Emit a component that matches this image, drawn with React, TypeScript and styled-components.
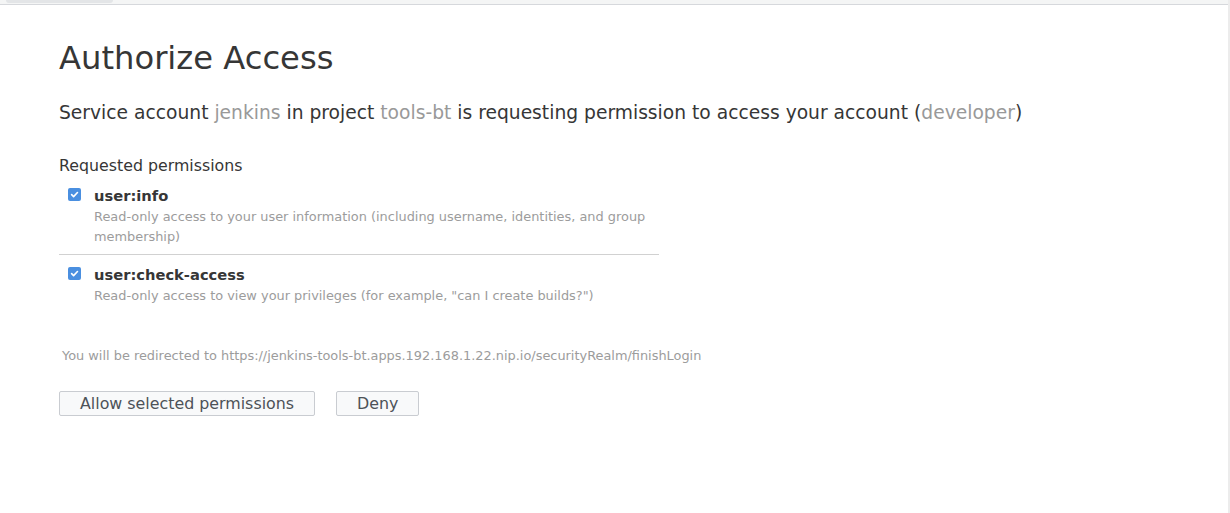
import styled, { createGlobalStyle } from 'styled-components';

const GlobalStyle = createGlobalStyle`
  html, body {
    margin: 0;
    padding: 0;
    background: #fff;
  }
  body {
    font-family: "DejaVu Sans", "Liberation Sans", sans-serif;
    color: #363636;
  }
`;

interface Permission {
  name: string;
  description: string;
}

const permissions: Permission[] = [
  {
    name: 'user:info',
    description:
      'Read-only access to your user information (including username, identities, and group membership)',
  },
  {
    name: 'user:check-access',
    description:
      'Read-only access to view your privileges (for example, "can I create builds?")',
  },
];

function App() {
  return (
    <>
      <GlobalStyle />
      <Frame>
        <TopBar>
          <Tab />
        </TopBar>
        <Content>
          <Title>Authorize Access</Title>
          <Lead>
            Service account <Muted>jenkins</Muted> in project{' '}
            <Muted>tools-bt</Muted> is requesting permission to access your
            account (<Muted>developer</Muted>)
          </Lead>

          <SectionTitle>Requested permissions</SectionTitle>
          <PermissionList>
            {permissions.map((p) => (
              <PermissionItem key={p.name}>
                <Check>
                  <svg width="9" height="9" viewBox="0 0 10 10" fill="none">
                    <path
                      d="M1.8 5.2 L4 7.3 L8.3 2.8"
                      stroke="#fff"
                      strokeWidth="1.8"
                      strokeLinecap="round"
                      strokeLinejoin="round"
                    />
                  </svg>
                </Check>
                <div>
                  <PermName>{p.name}</PermName>
                  <PermDesc>{p.description}</PermDesc>
                </div>
              </PermissionItem>
            ))}
          </PermissionList>

          <Redirect>
            You will be redirected to
            https://jenkins-tools-bt.apps.192.168.1.22.nip.io/securityRealm/finishLogin
          </Redirect>

          <Actions>
            <Button>Allow selected permissions</Button>
            <Button>Deny</Button>
          </Actions>
        </Content>
      </Frame>
    </>
  );
}

const Frame = styled.div`
  min-height: 513px;
  box-sizing: border-box;
  border-right: 2px solid #ececec;
`;

const TopBar = styled.div`
  height: 4px;
  background: #f4f5f5;
  border-bottom: 1px solid #d6d8dc;
  padding-left: 6px;
`;

const Tab = styled.div`
  width: 107px;
  height: 3px;
  background: #e3e5e7;
  border-radius: 0 0 3px 3px;
`;

const Content = styled.main`
  padding: 0 59px;
`;

const Title = styled.h1`
  margin: 35px 0 0;
  font-size: 32.2px;
  line-height: 37px;
  font-weight: normal;
  color: #363636;
`;

const Lead = styled.p`
  margin: 25px 0 0;
  font-size: 18.7px;
  line-height: 21px;
`;

const Muted = styled.span`
  color: #999;
`;

const SectionTitle = styled.h3`
  margin: 33px 0 0;
  font-size: 15.8px;
  line-height: 19px;
  font-weight: normal;
`;

const PermissionList = styled.ul`
  list-style: none;
  margin: 1px 0 0;
  padding: 0;
  width: 600px;
`;

const PermissionItem = styled.li`
  display: grid;
  grid-template-columns: 13px 1fr;
  column-gap: 13px;
  padding: 9px 0 7px 9px;
  border-bottom: 1px solid #d1d1d1;

  &:last-child {
    border-bottom: none;
  }
`;

const Check = styled.span`
  display: flex;
  align-items: center;
  justify-content: center;
  width: 13px;
  height: 13px;
  margin-top: 3px;
  border-radius: 2px;
  background: #4a8fe0;
`;

const PermName = styled.div`
  font-size: 14.7px;
  line-height: 22px;
  font-weight: bold;
  color: #363636;
`;

const PermDesc = styled.div`
  font-size: 12.9px;
  line-height: 20px;
  color: #9c9c9c;
`;

const Redirect = styled.p`
  margin: 35px 0 0;
  padding-left: 3px;
  font-size: 12.9px;
  line-height: 15px;
  color: #9c9c9c;
`;

const Actions = styled.div`
  display: flex;
  gap: 21px;
  margin-top: 28px;
`;

const Button = styled.button`
  font-family: inherit;
  font-size: 15.85px;
  line-height: 23px;
  padding: 0 20px;
  color: #4d5258;
  background: #f8f9fa;
  border: 1px solid #c9ccd1;
  border-radius: 2px;
  cursor: pointer;
`;

export default App;
